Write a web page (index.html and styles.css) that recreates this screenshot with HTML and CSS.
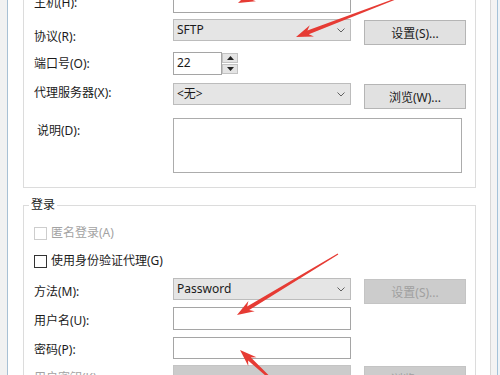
FILE: index.html
```html
<!DOCTYPE html>
<html lang="zh-CN">
<head>
    <meta charset="UTF-8">
    <meta name="viewport" content="width=device-width, initial-scale=1.0">
    <title>会话属性</title>
    <link rel="stylesheet" href="styles.css">
</head>
<body>

    <div class="window">
        <div class="edge-left"></div>

        <div class="panel">
            <div class="group group-conn">
                <div class="row row-host">
                    <span class="label">主机(H):</span>
                    <div class="input"></div>
                </div>
                <div class="row row-proto">
                    <span class="label">协议(R):</span>
                    <div class="select">
                        <span>SFTP</span>
                        <svg class="chev" width="8" height="5" viewBox="0 0 8 5"><polyline points="0.5,0.5 4,4 7.5,0.5" /></svg>
                    </div>
                    <button class="btn">设置(S)...</button>
                </div>
                <div class="row row-port">
                    <span class="label">端口号(O):</span>
                    <div class="input input-port">22</div>
                    <div class="spin">
                        <span class="spin-btn"><svg width="7" height="4" viewBox="0 0 7 4"><polygon points="0,4 3.5,0 7,4" /></svg></span>
                        <span class="spin-btn"><svg width="7" height="4" viewBox="0 0 7 4"><polygon points="0,0 7,0 3.5,4" /></svg></span>
                    </div>
                </div>
                <div class="row row-proxy">
                    <span class="label">代理服务器(X):</span>
                    <div class="select">
                        <span>&lt;无&gt;</span>
                        <svg class="chev" width="8" height="5" viewBox="0 0 8 5"><polyline points="0.5,0.5 4,4 7.5,0.5" /></svg>
                    </div>
                    <button class="btn">浏览(W)...</button>
                </div>
                <div class="row row-desc">
                    <span class="label label-desc">说明(D):</span>
                    <div class="textarea"></div>
                </div>
            </div>

            <fieldset class="group-login">
                <legend>登录</legend>

                <div class="check-row check-anon">
                    <span class="check check-off"></span>
                    <span class="muted">匿名登录(A)</span>
                </div>
                <div class="check-row check-agent">
                    <span class="check"></span>
                    <span>使用身份验证代理(G)</span>
                </div>

                <div class="row row-method">
                    <span class="label">方法(M):</span>
                    <div class="select">
                        <span>Password</span>
                        <svg class="chev" width="8" height="5" viewBox="0 0 8 5"><polyline points="0.5,0.5 4,4 7.5,0.5" /></svg>
                    </div>
                    <button class="btn btn-off">设置(S)...</button>
                </div>
                <div class="row row-user">
                    <span class="label">用户名(U):</span>
                    <div class="input"></div>
                </div>
                <div class="row row-pass">
                    <span class="label">密码(P):</span>
                    <div class="input input-pass"></div>
                </div>
                <div class="row row-key">
                    <span class="label muted">用户密钥(K):</span>
                    <div class="select select-off"></div>
                    <button class="btn btn-off">浏览(B)...</button>
                </div>
            </fieldset>
        </div>

        <div class="edge-right"></div>

        <!-- red annotation arrows drawn on top of the dialog -->
        <svg class="marks" width="500" height="375" viewBox="0 0 500 375">
            <polygon points="340.4,-44.6 250.7,-0.7 255.9,1.2 238,3 250.8,-9.7 249,-4.3 339.6,-45.4" />
            <polygon points="398.2,-1.5 308.8,34.3 314,36.5 296,37 309.8,25.3 307.4,30.5 397.8,-2.5" />
            <polygon points="338.3,254.4 249.2,310 254.7,311.3 237,315 248.4,301.1 247.1,306.6 337.7,253.6" />
            <polygon points="272.7,379.3 250.9,357.4 256.5,357.2 240,350 248.3,366 248.1,360.4 271.3,380.7" />
        </svg>
    </div>

</body>
</html>
```

FILE: styles.css
```css
* {
    box-sizing: border-box;
}

body {
    margin: 0;
    background-color: #fff;
    color: #1b1b1b;
    font-family: "Noto Sans", "Noto Sans CJK SC", sans-serif;
    font-size: 12px;
    overflow: hidden;
}

.window {
    position: relative;
    display: flex;
    width: 500px;
    height: 375px;
    overflow: hidden;
}

.edge-left {
    flex: none;
    width: 8px;
    background-color: #f1f1f1;
    border-right: 1px solid #a8c0d4;
}

.edge-right {
    flex: none;
    width: 10px;
    background-color: #f3f3f3;
    border-left: 1px solid #d7d7d7;
    box-shadow: inset -2px 0 0 #eef3f7, inset -3px 0 0 #a4c2d9;
}

.panel {
    flex: 1;
    margin-top: -24px;
    padding: 0 14px 0 15px;
}

.group-conn {
    border: 1px solid #dcdcdc;
    padding: 13px 9px 14px 10px;
}

.row {
    display: flex;
    align-items: flex-start;
}

.label {
    flex: none;
    width: 139px;
    line-height: 16px;
}

.muted {
    color: #a3a3a3;
}

.input {
    width: 178px;
    height: 23px;
    border: 1px solid #a5a5a5;
    background-color: #fff;
}

.input-port {
    width: 49px;
    padding: 2px 0 0 3px;
    line-height: 16px;
}

.spin {
    display: flex;
    flex-direction: column;
    justify-content: space-between;
    width: 16px;
    height: 23px;
    padding: 1px 0;
}

.spin-btn {
    display: flex;
    align-items: center;
    justify-content: center;
    height: 10px;
    background-color: #e4e4e4;
    border: 1px solid #c2c2c2;
}

.spin-btn polygon {
    fill: #222;
}

.select {
    display: flex;
    align-items: center;
    justify-content: space-between;
    width: 178px;
    height: 22px;
    padding: 0 5px 0 3px;
    background-color: #e5e5e5;
    border: 1px solid #bcbcbc;
    line-height: 16px;
}

.select-off {
    background-color: #cbcbcb;
    border-color: #c4c4c4;
}

.chev polyline {
    fill: none;
    stroke: #606060;
    stroke-width: 1;
}

.btn {
    flex: none;
    width: 102px;
    height: 25px;
    margin: 1px 0 0 13px;
    padding: 0;
    background-color: #e1e1e1;
    border: 1px solid #b5b5b5;
    color: #1b1b1b;
    font: inherit;
}

.btn-off {
    background-color: #cccccc;
    border-color: #c4c4c4;
    color: #a0a0a0;
}

.textarea {
    width: 289px;
    height: 55px;
    border: 1px solid #acacac;
    background-color: #fff;
}

/* row heights follow the dialog's fixed control positions */
.row-host {
    height: 29px;
}

.row-host .label {
    padding-top: 5px;
}

.row-proto {
    height: 33px;
}

.row-proto .label {
    padding-top: 10px;
}

.row-port {
    height: 31px;
}

.row-port .label {
    padding-top: 4px;
}

.row-proxy {
    height: 35px;
}

.row-proxy .label {
    padding-top: 2px;
}

.row-desc {
    height: 55px;
}

.label-desc {
    padding: 5px 0 0 3px;
}

.group-login {
    min-width: 0;
    margin: 9px 0 0;
    padding: 12px 9px 0 10px;
    border: 1px solid #dcdcdc;
}

.group-login legend {
    margin-left: -5px;
    padding: 0 2px;
    line-height: 16px;
}

.check-row {
    display: flex;
    align-items: center;
    gap: 4px;
    height: 16px;
    line-height: 16px;
}

.check-anon {
    margin-bottom: 12px;
}

.check-agent {
    margin-bottom: 9px;
}

.check {
    flex: none;
    width: 13px;
    height: 13px;
    border: 1px solid #333;
    background-color: #fff;
}

.check-off {
    border-color: #cdcdcd;
}

.row-method {
    height: 29px;
}

.row-method .label {
    padding-top: 6px;
}

.row-user {
    height: 30px;
}

.row-user .label {
    padding-top: 6px;
}

.row-pass {
    height: 28px;
}

.input-pass {
    height: 22px;
}

.row-pass .label,
.row-key .label {
    padding-top: 5px;
}

.row-key {
    height: 30px;
}

.marks {
    position: absolute;
    left: 0;
    top: 0;
    pointer-events: none;
}

.marks polygon {
    fill: #e63b34;
}
```
